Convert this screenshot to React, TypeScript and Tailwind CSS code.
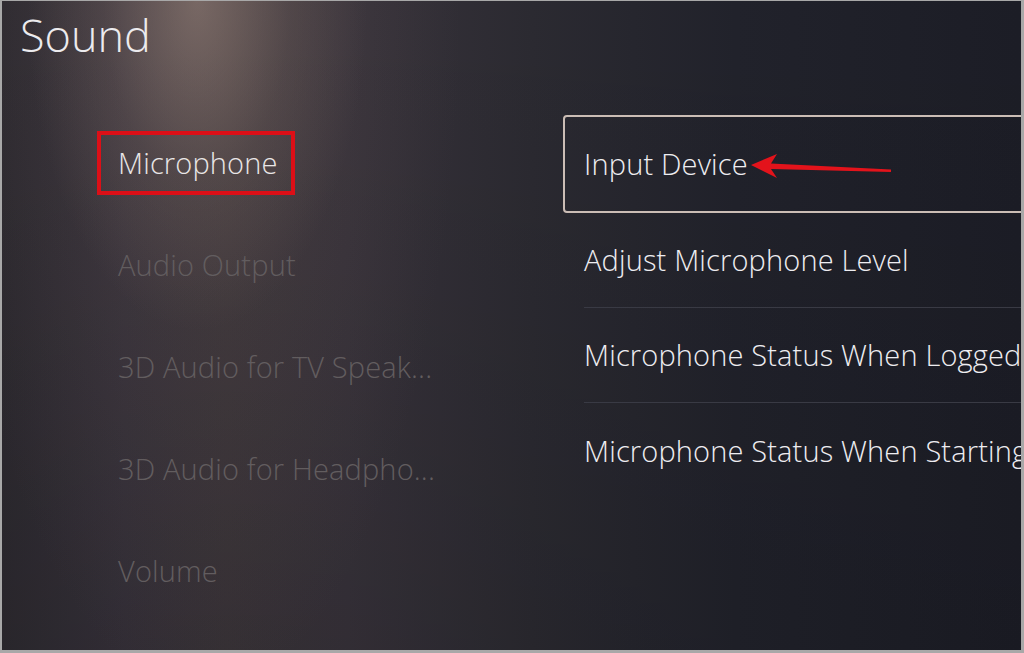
import React from "react";

const leftItems = [
  { label: "Microphone", active: true },
  { label: "Audio Output" },
  { label: "3D Audio for TV Speak..." },
  { label: "3D Audio for Headpho..." },
  { label: "Volume" },
];

const rightItems = [
  "Adjust Microphone Level",
  "Microphone Status When Logged In",
  "Microphone Status When Starting Your PS5",
];

export default function App() {
  return (
    <div
      className="relative w-[1024px] h-[653px] overflow-hidden border-t-[1px] border-l-[2px] border-r-[3px] border-b-[3px] border-[#a8a8a8] bg-[#1d1e27]"
      style={{ fontFamily: '"Open Sans", "Noto Sans", sans-serif' }}
    >
      <div className="relative w-full h-full overflow-hidden bg-[radial-gradient(ellipse_170px_330px_at_195px_0px,rgba(160,138,128,0.55),rgba(150,128,118,0.18)_55%,rgba(0,0,0,0)_100%),radial-gradient(ellipse_260px_700px_at_200px_0px,rgba(120,100,96,0.22),rgba(0,0,0,0)_100%),linear-gradient(180deg,rgba(0,0,0,0)_0%,rgba(0,0,0,0.1)_100%),linear-gradient(90deg,#2d2a30_0%,#36313a_12%,#3a3439_22%,#37323a_34%,#2b2a31_52%,#21222b_72%,#1c1d26_100%)]">
        <div className="pt-[11px] pl-[18px]">
          <h1 className="text-[45px] leading-[46px] font-light text-[#ecebee]">
            Sound
          </h1>
        </div>

        <div className="flex">
          {/* Left menu */}
          <div className="w-[561px] shrink-0 pt-[54px] pl-[116px]">
            {leftItems.map((it) => (
              <div key={it.label} className="h-[102px] flex items-center">
                {it.active ? (
                  <span className="-ml-[21px] h-[64px] flex items-center border-[4px] border-[#dc0f17] pl-[17px] pr-[13px] text-[29px] tracking-[0.15px] font-light text-[#e9e6e6] whitespace-nowrap">
                    {it.label}
                  </span>
                ) : (
                  <span className="text-[29px] tracking-[0.15px] font-light text-[#625d5f] whitespace-nowrap">
                    {it.label}
                  </span>
                )}
              </div>
            ))}
          </div>

          {/* Right list */}
          <div className="w-[640px] pt-[57px] shrink-0">
            <div className="h-[98px] flex items-center border-[2px] border-[#cbbdb5] rounded-[4px] pl-[19px]">
              <span className="text-[29px] tracking-[0.15px] font-light text-[#eeedf1] whitespace-nowrap">
                Input Device
              </span>
            </div>
            {rightItems.map((t, i) => (
              <div
                key={t}
                className={`ml-[21px] h-[95px] flex items-center ${
                  i < rightItems.length - 1 ? "border-b border-[#393a44]" : ""
                }`}
              >
                <span className="text-[29px] tracking-[0.15px] font-light text-[#eeedf1] whitespace-nowrap">
                  {t}
                </span>
              </div>
            ))}
          </div>
        </div>
      </div>

      {/* annotation arrow */}
      <svg
        className="absolute left-[-2px] top-[-1px] pointer-events-none"
        width="1024"
        height="653"
        viewBox="0 0 1024 653"
      >
        <path
          d="M751 165 L777 154 L771 163.5 L891 169.5 L891 172 L771 169 L777 178 Z"
          fill="#e3131b"
        />
      </svg>
    </div>
  );
}
